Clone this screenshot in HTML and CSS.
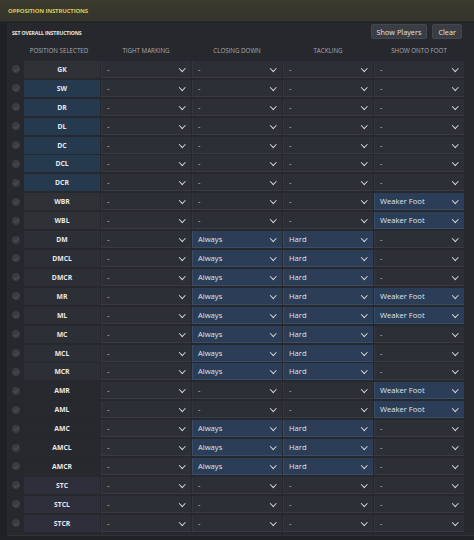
FILE: index.html
```html
<!DOCTYPE html>
<html>
<head>
<meta charset="utf-8">
<link rel="stylesheet" href="styles.css">
</head>
<body>
<div class="app">
  <div class="topbar"><span class="title">OPPOSITION INSTRUCTIONS</span></div>
  <div class="panel">
    <div class="toolbar">
      <span class="subtitle">SET OVERALL INSTRUCTIONS</span>
      <div class="buttons"><span class="btn">Show Players</span><span class="btn">Clear</span></div>
    </div>
    <div class="table">
      <div class="head"><span></span><span>POSITION SELECTED</span><span>TIGHT MARKING</span><span>CLOSING DOWN</span><span>TACKLING</span><span>SHOW ONTO FOOT</span></div>
      <div class="row"><i class="chk"></i><span class="pos grey">GK</span><span class="sel">-</span><span class="sel">-</span><span class="sel">-</span><span class="sel">-</span></div>
      <div class="row"><i class="chk"></i><span class="pos blue">SW</span><span class="sel">-</span><span class="sel">-</span><span class="sel">-</span><span class="sel">-</span></div>
      <div class="row"><i class="chk"></i><span class="pos blue">DR</span><span class="sel">-</span><span class="sel">-</span><span class="sel">-</span><span class="sel">-</span></div>
      <div class="row"><i class="chk"></i><span class="pos blue">DL</span><span class="sel">-</span><span class="sel">-</span><span class="sel">-</span><span class="sel">-</span></div>
      <div class="row"><i class="chk"></i><span class="pos blue">DC</span><span class="sel">-</span><span class="sel">-</span><span class="sel">-</span><span class="sel">-</span></div>
      <div class="row"><i class="chk"></i><span class="pos blue">DCL</span><span class="sel">-</span><span class="sel">-</span><span class="sel">-</span><span class="sel">-</span></div>
      <div class="row"><i class="chk"></i><span class="pos blue">DCR</span><span class="sel">-</span><span class="sel">-</span><span class="sel">-</span><span class="sel">-</span></div>
      <div class="row"><i class="chk"></i><span class="pos grey">WBR</span><span class="sel">-</span><span class="sel">-</span><span class="sel">-</span><span class="sel on">Weaker Foot</span></div>
      <div class="row"><i class="chk"></i><span class="pos grey">WBL</span><span class="sel">-</span><span class="sel">-</span><span class="sel">-</span><span class="sel on">Weaker Foot</span></div>
      <div class="row"><i class="chk"></i><span class="pos mid">DM</span><span class="sel">-</span><span class="sel on">Always</span><span class="sel on">Hard</span><span class="sel">-</span></div>
      <div class="row"><i class="chk"></i><span class="pos mid">DMCL</span><span class="sel">-</span><span class="sel on">Always</span><span class="sel on">Hard</span><span class="sel">-</span></div>
      <div class="row"><i class="chk"></i><span class="pos mid">DMCR</span><span class="sel">-</span><span class="sel on">Always</span><span class="sel on">Hard</span><span class="sel">-</span></div>
      <div class="row"><i class="chk"></i><span class="pos mid">MR</span><span class="sel">-</span><span class="sel on">Always</span><span class="sel on">Hard</span><span class="sel on">Weaker Foot</span></div>
      <div class="row"><i class="chk"></i><span class="pos mid">ML</span><span class="sel">-</span><span class="sel on">Always</span><span class="sel on">Hard</span><span class="sel on">Weaker Foot</span></div>
      <div class="row"><i class="chk"></i><span class="pos mid">MC</span><span class="sel">-</span><span class="sel on">Always</span><span class="sel on">Hard</span><span class="sel">-</span></div>
      <div class="row"><i class="chk"></i><span class="pos mid">MCL</span><span class="sel">-</span><span class="sel on">Always</span><span class="sel on">Hard</span><span class="sel">-</span></div>
      <div class="row"><i class="chk"></i><span class="pos mid">MCR</span><span class="sel">-</span><span class="sel on">Always</span><span class="sel on">Hard</span><span class="sel">-</span></div>
      <div class="row"><i class="chk"></i><span class="pos dark">AMR</span><span class="sel">-</span><span class="sel">-</span><span class="sel">-</span><span class="sel on">Weaker Foot</span></div>
      <div class="row"><i class="chk"></i><span class="pos dark">AML</span><span class="sel">-</span><span class="sel">-</span><span class="sel">-</span><span class="sel on">Weaker Foot</span></div>
      <div class="row"><i class="chk"></i><span class="pos dark">AMC</span><span class="sel">-</span><span class="sel on">Always</span><span class="sel on">Hard</span><span class="sel">-</span></div>
      <div class="row"><i class="chk"></i><span class="pos dark">AMCL</span><span class="sel">-</span><span class="sel on">Always</span><span class="sel on">Hard</span><span class="sel">-</span></div>
      <div class="row"><i class="chk"></i><span class="pos dark">AMCR</span><span class="sel">-</span><span class="sel on">Always</span><span class="sel on">Hard</span><span class="sel">-</span></div>
      <div class="row"><i class="chk"></i><span class="pos purple">STC</span><span class="sel">-</span><span class="sel">-</span><span class="sel">-</span><span class="sel">-</span></div>
      <div class="row"><i class="chk"></i><span class="pos purple">STCL</span><span class="sel">-</span><span class="sel">-</span><span class="sel">-</span><span class="sel">-</span></div>
      <div class="row"><i class="chk"></i><span class="pos purple">STCR</span><span class="sel">-</span><span class="sel">-</span><span class="sel">-</span><span class="sel">-</span></div>
    </div>
  </div>
</div>
</body>
</html>
```
FILE: styles.css
```css
html, body {
  margin: 0;
  padding: 0;
  background: #1e2024;
}
.app {
  width: 474px;
  height: 540px;
  overflow: hidden;
  font-family: "Open Sans", "Liberation Sans", sans-serif;
  background: #1f2125;
}
.topbar {
  height: 21px;
  display: flex;
  align-items: center;
  padding-left: 8px;
  background: linear-gradient(#3b3a2f, #35342b);
  border-bottom: 1px solid #2a2a24;
}
.title {
  color: #d9c95a;
  font-size: 6px;
  font-weight: 700;
  letter-spacing: -0.15px;
  margin-top: 1px;
}
.panel {
  margin-left: 7px;
  margin-top: 1px;
  background: #26282d;
  height: 512px;
  border-bottom: 1px solid #303238;
}
.toolbar {
  box-sizing: border-box;
  height: 19px;
  display: flex;
  align-items: flex-start;
  justify-content: space-between;
  padding: 1px 12px 0 5px;
}
.subtitle {
  color: #e8e8e8;
  font-size: 5.2px;
  font-weight: 700;
  letter-spacing: -0.15px;
  margin-top: 5px;
}
.buttons {
  display: flex;
  gap: 5px;
}
.btn {
  box-sizing: border-box;
  height: 15px;
  padding: 0 5px;
  display: flex;
  align-items: center;
  background: #3a3d43;
  border-radius: 2px;
  border: 1px solid #44474d;
  color: #e4e4e4;
  font-size: 7.3px;
}
.table {
  display: grid;
  grid-template-columns: 16px 76px 90px 90px 90px 90px;
  grid-auto-rows: 17px;
  column-gap: 1px;
  row-gap: 1.92px;
}
.head, .row {
  display: contents;
}
.head span {
  color: #a9abb0;
  font-size: 6.2px;
  text-align: center;
  line-height: 17px;
  height: 17px;
  white-space: nowrap;
}
.head span:nth-child(2) {
  padding-right: 6px;
}
.chk {
  width: 8px;
  height: 8px;
  border-radius: 50%;
  background: #3a3c42;
  align-self: center;
  justify-self: center;
  margin-left: 2px;
  position: relative;
}
.chk::after {
  content: "";
  position: absolute;
  left: 2.5px;
  top: 1.5px;
  width: 2px;
  height: 3.5px;
  border-right: 1px solid #4b4e55;
  border-bottom: 1px solid #4b4e55;
  transform: rotate(45deg);
}
.pos {
  color: #e6e8ea;
  font-size: 6.8px;
  font-weight: 700;
  text-align: center;
  line-height: 17px;
}
.pos.grey { background: #2f3136; }
.pos.blue { background: #263a4f; }
.pos.mid { background: #2c2f35; }
.pos.dark { background: #27292e; }
.pos.purple { background: #2e2f3b; }
.sel {
  position: relative;
  background: #2c2f36;
  border-bottom: 1px solid #383b42;
  border-left: 1px solid #33363d;
  color: #d0d3d8;
  font-size: 7.6px;
  line-height: 16px;
  padding-left: 5px;
}
.sel.on {
  background: #2c3d57;
  border-bottom-color: #3a4c66;
  border-left-color: #3a4c66;
  color: #dfe6ef;
}
.sel::after {
  content: "";
  position: absolute;
  right: 7px;
  top: 5px;
  width: 3.5px;
  height: 3.5px;
  border-right: 1.6px solid #d6d8dc;
  border-bottom: 1.6px solid #d6d8dc;
  transform: rotate(45deg);
}
```
